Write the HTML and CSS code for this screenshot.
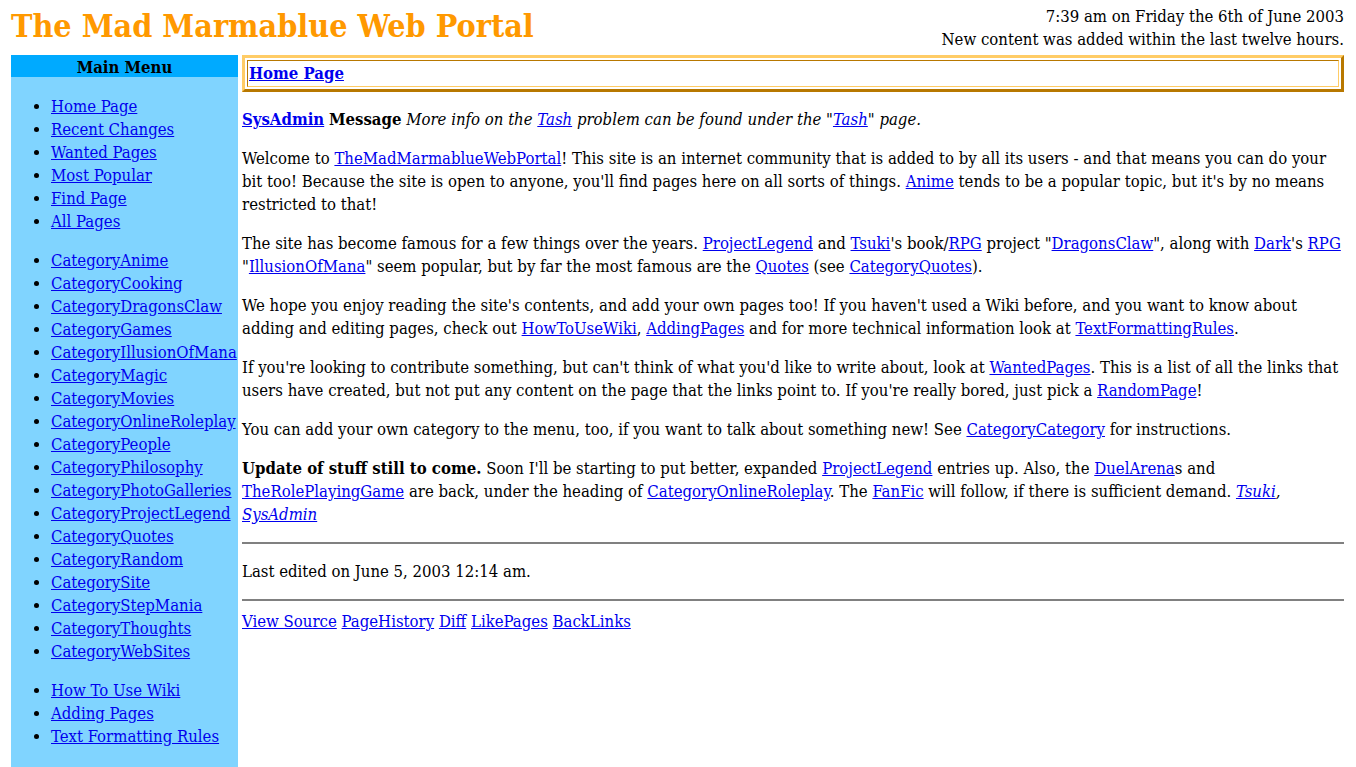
FILE: index.html
```html
<!DOCTYPE html>
<html lang="en">
<head>
<meta charset="utf-8">
<title>The Mad Marmablue Web Portal</title>
<link rel="stylesheet" href="styles.css">
</head>
<body>
<header class="top">
  <h1 class="site-title">The Mad Marmablue Web Portal</h1>
  <div class="status">
    <div>7:39 am on Friday the 6th of June 2003</div>
    <div>New content was added within the last twelve hours.</div>
  </div>
</header>
<div class="layout">
  <aside class="menu">
    <div class="menu-head">Main Menu</div>
    <ul class="menu-list">
      <li><a href="#">Home Page</a></li>
      <li><a href="#">Recent Changes</a></li>
      <li><a href="#">Wanted Pages</a></li>
      <li><a href="#">Most Popular</a></li>
      <li><a href="#">Find Page</a></li>
      <li><a href="#">All Pages</a></li>
    </ul>
    <ul class="menu-list">
      <li><a href="#">CategoryAnime</a></li>
      <li><a href="#">CategoryCooking</a></li>
      <li><a href="#">CategoryDragonsClaw</a></li>
      <li><a href="#">CategoryGames</a></li>
      <li><a href="#">CategoryIllusionOfMana</a></li>
      <li><a href="#">CategoryMagic</a></li>
      <li><a href="#">CategoryMovies</a></li>
      <li><a href="#">CategoryOnlineRoleplay</a></li>
      <li><a href="#">CategoryPeople</a></li>
      <li><a href="#">CategoryPhilosophy</a></li>
      <li><a href="#">CategoryPhotoGalleries</a></li>
      <li><a href="#">CategoryProjectLegend</a></li>
      <li><a href="#">CategoryQuotes</a></li>
      <li><a href="#">CategoryRandom</a></li>
      <li><a href="#">CategorySite</a></li>
      <li><a href="#">CategoryStepMania</a></li>
      <li><a href="#">CategoryThoughts</a></li>
      <li><a href="#">CategoryWebSites</a></li>
    </ul>
    <ul class="menu-list">
      <li><a href="#">How To Use Wiki</a></li>
      <li><a href="#">Adding Pages</a></li>
      <li><a href="#">Text Formatting Rules</a></li>
    </ul>
  </aside>
  <main class="content">
    <div class="page-title"><div class="page-title-inner"><a href="#">Home Page</a></div></div>
    <p><a href="#" class="strong">SysAdmin</a> <b>Message</b> <i>More info on the <a href="#">Tash</a> problem can be found under the "<a href="#">Tash</a>" page.</i></p>
    <p>Welcome to <a href="#">TheMadMarmablueWebPortal</a>! This site is an internet community that is added to by all its users - and that means you can do your bit too! Because the site is open to anyone, you'll find pages here on all sorts of things. <a href="#">Anime</a> tends to be a popular topic, but it's by no means restricted to that!</p>
    <p>The site has become famous for a few things over the years. <a href="#">ProjectLegend</a> and <a href="#">Tsuki</a>'s book/<a href="#">RPG</a> project "<a href="#">DragonsClaw</a>", along with <a href="#">Dark</a>'s <a href="#">RPG</a> "<a href="#">IllusionOfMana</a>" seem popular, but by far the most famous are the <a href="#">Quotes</a> (see <a href="#">CategoryQuotes</a>).</p>
    <p>We hope you enjoy reading the site's contents, and add your own pages too! If you haven't used a Wiki before, and you want to know about adding and editing pages, check out <a href="#">HowToUseWiki</a>, <a href="#">AddingPages</a> and for more technical information look at <a href="#">TextFormattingRules</a>.</p>
    <p>If you're looking to contribute something, but can't think of what you'd like to write about, look at <a href="#">WantedPages</a>. This is a list of all the links that users have created, but not put any content on the page that the links point to. If you're really bored, just pick a <a href="#">RandomPage</a>!</p>
    <p>You can add your own category to the menu, too, if you want to talk about something new! See <a href="#">CategoryCategory</a> for instructions.</p>
    <p><b>Update of stuff still to come.</b> Soon I'll be starting to put better, expanded <a href="#">ProjectLegend</a> entries up. Also, the <a href="#">DuelArena</a>s and <a href="#">TheRolePlayingGame</a> are back, under the heading of <a href="#">CategoryOnlineRoleplay</a>. The <a href="#">FanFic</a> will follow, if there is sufficient demand. <i><a href="#">Tsuki</a>, <a href="#">SysAdmin</a></i></p>
    <hr class="rule">
    <p>Last edited on June 5, 2003 12:14 am.</p>
    <hr class="rule rule-last">
    <div class="footer-links"><a href="#">View Source</a> <a href="#">PageHistory</a> <a href="#">Diff</a> <a href="#">LikePages</a> <a href="#">BackLinks</a></div>
  </main>
</div>
</body>
</html>
```

FILE: styles.css
```css
html, body {
  margin: 0;
  padding: 0;
  background: #ffffff;
}

body {
  font-family: "DejaVu Serif Condensed", "DejaVu Serif", serif;
  font-stretch: condensed;
  font-size: 16.6px;
  line-height: 23px;
  color: #000000;
  padding: 4px 12px 0 11px;
}

a {
  color: #0000ee;
  text-decoration: underline;
}

.top {
  display: flex;
  justify-content: space-between;
  align-items: flex-start;
  height: 51px;
}

.site-title {
  margin: 0;
  font-size: 32px;
  line-height: 44px;
  font-weight: bold;
  color: #ff9900;
}

.status {
  text-align: right;
  padding-top: 1px;
}

.layout {
  display: flex;
  align-items: stretch;
  gap: 4px;
}

.menu {
  flex: 0 0 227px;
  width: 227px;
  background: #80d4ff;
  min-height: 712px;
  padding-bottom: 4px;
}

.menu-head {
  background: #00aaff;
  font-weight: bold;
  text-align: center;
  height: 20px;
  line-height: 20px;
  padding-top: 2px;
}

.menu-list {
  margin: 18px 0 16px 0;
  padding-left: 40px;
  white-space: nowrap;
}

.menu-list + .menu-list {
  margin-top: 16px;
}

.content {
  flex: 1 1 auto;
  min-width: 0;
}

.page-title {
  border: 3px solid;
  border-color: #ffcc66 #b87800 #b87800 #ffcc66;
  padding: 2px;
}

.page-title-inner {
  border: 1px solid;
  border-color: #b87800 #ffcc66 #ffcc66 #b87800;
  padding: 1px 1px;
  font-weight: bold;
}

.content p {
  margin: 16px 0;
}

.strong {
  font-weight: bold;
}

.rule {
  border: 0;
  border-top: 2px solid #808080;
  height: 0;
  margin: 16px 0;
}

.rule-last {
  margin-bottom: 9px;
}

.footer-links {
  margin-top: 0;
}
```
